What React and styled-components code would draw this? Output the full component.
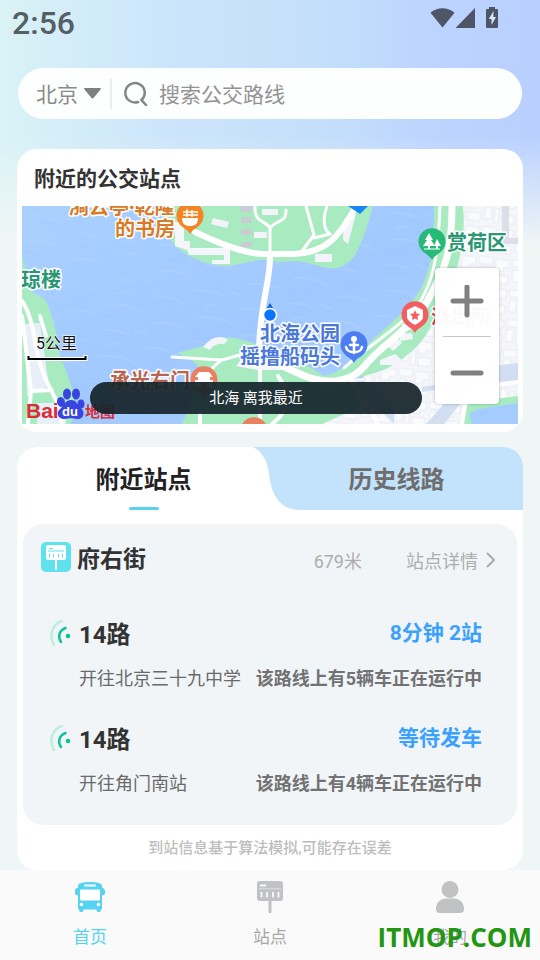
import React, { useState } from 'react';
import styled, { createGlobalStyle } from 'styled-components';

const GlobalStyle = createGlobalStyle`
  * {
    box-sizing: border-box;
  }

  body {
    background-color: #f0f6f6;
    font-family: Roboto, 'Noto Sans CJK SC', sans-serif;
    margin: 0;
  }

  button,
  input,
  select {
    background: none;
    border: 0;
    color: inherit;
    font: inherit;
    margin: 0;
    padding: 0;
  }

  h1,
  h2,
  h3,
  p {
    margin: 0;
  }
`;

const Page = styled.div`
  background:
    linear-gradient(to bottom, rgba(240, 246, 246, 0) 135px, #f0f6f6 245px),
    linear-gradient(to right, #d9f3f6 0%, #cde5fb 30%, #c3defb 62%, #bdd4ff 80%, #b9d0ff 100%);
  display: flex;
  flex-direction: column;
  min-height: 100vh;
`;

const StatusBar = styled.header`
  color: #545f66;
  display: flex;
  height: 68px;
  justify-content: space-between;
  padding: 6px 41px 0 12px;
`;

StatusBar.Time = styled.span`
  font-size: 32px;
  font-weight: 500;
  line-height: 34px;
`;

const SearchBar = styled.form`
  align-items: center;
  background-color: #fdfefe;
  border-radius: 26px;
  color: #8a8a8a;
  display: flex;
  font-size: 21px;
  height: 51px;
  margin: 0 18px 30px;
  padding: 0 18px;
`;

SearchBar.City = styled.label`
  align-items: center;
  border-right: 2px solid #ececec;
  display: flex;
  gap: 5px;
  height: 30px;
  margin-right: 12px;
  padding-right: 9px;
`;

SearchBar.Select = styled.select`
  appearance: none;
  line-height: 32px;
  padding-top: 2px;
  width: 43px;
`;

SearchBar.Input = styled.input`
  flex: 1;
  line-height: 32px;
  margin-left: 11px;
  min-width: 0;
  outline: none;
  padding-top: 2px;

  &::placeholder {
    color: #939393;
    opacity: 1;
  }
`;

const Card = styled.section`
  background-color: #fff;
  border-radius: 20px;
  margin: 0 17px;
  overflow: hidden;
`;

const MapCard = styled(Card)`
  margin-bottom: 15px;
  padding: 0 5px 8px;
`;

const MapTitle = styled.h1`
  color: #333;
  font-size: 21px;
  font-weight: 700;
  line-height: 53px;
  padding: 4px 12px 0;
`;

const MapView = styled.div`
  background-color: #a5ccff;
  height: 218px;
  overflow: hidden;
  position: relative;

  > svg {
    display: block;
    height: 100%;
    width: 100%;
  }
`;

const Toast = styled.p`
  background-color: rgba(21, 37, 43, 0.93);
  border-radius: 16px;
  bottom: 10px;
  color: #fff;
  font-size: 15px;
  left: 68px;
  line-height: 32px;
  position: absolute;
  right: 96px;
  text-align: center;
`;

const ZoomControl = styled.div`
  background-color: rgba(255, 255, 255, 0.97);
  border-radius: 4px;
  box-shadow: 0 0 3px rgba(0, 0, 0, 0.3);
  display: flex;
  flex-direction: column;
  padding: 0 8px;
  position: absolute;
  right: 19px;
  top: 62px;
`;

ZoomControl.Button = styled.button`
  height: 68px;
  width: 48px;

  & + & {
    border-top: 1px solid #c8c8c8;
  }

  svg {
    display: block;
    margin: 0 auto;
  }
`;

const TabBar = styled.div`
  background-color: #c3e2fb;
  display: grid;
  grid-template-columns: 1fr 1fr;
  height: 63px;
`;

const Tab = styled.button`
  color: ${(props) => (props.$active ? '#222' : '#6e6e6e')};
  font-size: 24px;
  font-weight: 700;
  line-height: 59px;
  padding-top: 4px;
  position: relative;

  &::before {
    background-color: #fff;
    content: ${(props) => (props.$active ? "''" : 'none')};
    inset: 0 17px 0 0;
    position: absolute;
  }

  &::after {
    background-color: #56d3ee;
    border-radius: 2px;
    bottom: 0;
    content: ${(props) => (props.$active ? "''" : 'none')};
    height: 3px;
    left: calc(50% - 15px);
    position: absolute;
    width: 30px;
  }

  svg {
    left: calc(100% - 17px);
    position: absolute;
    top: 0;
  }

  span {
    position: relative;
  }
`;

const StationPanel = styled.div`
  background-color: #f1f5f7;
  border-radius: 20px;
  margin: 14px 6px 0;
  padding-bottom: 10px;
`;

const StationHeader = styled.div`
  align-items: center;
  display: flex;
  height: 66px;
  margin-bottom: 15px;
  padding: 0 21px 0 18px;
`;

StationHeader.Name = styled.h2`
  color: #333;
  flex: 1;
  font-size: 23px;
  font-weight: 700;
  line-height: 36px;
  margin-left: 6px;
  padding-top: 6px;
`;

StationHeader.Distance = styled.span`
  color: #adadad;
  font-size: 18px;
  margin-right: 44px;
  padding-top: 6px;
`;

StationHeader.Link = styled.a`
  align-items: center;
  color: #adadad;
  display: flex;
  font-size: 18px;
  gap: 7px;
  padding-top: 6px;
  text-decoration: none;
`;

const Route = styled.article`
  display: grid;
  grid-template-columns: 24px 1fr auto;
  column-gap: 5px;
  row-gap: 12px;
  padding: 12px 35px 17px 27px;
`;

Route.Signal = styled.svg`
  margin-top: 2px;
`;

Route.Name = styled.h3`
  color: #333;
  font-size: 24px;
  font-weight: 700;
  line-height: 36px;
`;

Route.Arrival = styled.p`
  color: #3ba1ff;
  font-size: 21px;
  font-weight: 700;
  line-height: 32px;
  text-align: right;
`;

Route.Direction = styled.p`
  color: #6a6a6a;
  font-size: 18px;
  grid-column: 2;
  line-height: 28px;
`;

Route.Running = styled.p`
  color: #727272;
  font-size: 18px;
  font-weight: 700;
  line-height: 28px;
`;

const Notice = styled.p`
  color: #bdbdbd;
  font-size: 15px;
  font-weight: 500;
  line-height: 43px;
  padding-top: 2px;
  text-align: center;
`;

const NavBar = styled.nav`
  background-color: #fafafa;
  display: grid;
  grid-template-columns: repeat(3, 1fr);
  height: 90px;
  margin-top: auto;
  padding-top: 11px;
  position: relative;
`;

NavBar.Item = styled.a`
  align-items: center;
  color: ${(props) => (props.$active ? '#56d3ee' : '#a8a8a8')};
  display: flex;
  flex-direction: column;
  font-size: 17px;
  gap: 12px;
  line-height: 24px;
  text-decoration: none;
`;

const Watermark = styled.span`
  bottom: 5px;
  color: #229612;
  font-family: 'Open Sans', 'Noto Sans', sans-serif;
  font-size: 26px;
  font-weight: 700;
  line-height: 36px;
  pointer-events: none;
  position: absolute;
  right: 8px;
`;

const MapLabel = styled.text`
  fill: ${(props) => props.$color};
  font-family: 'Noto Sans', 'Noto Sans CJK SC', sans-serif;
  font-size: 20px;
  font-weight: 700;
  paint-order: stroke;
  stroke: #fff;
  stroke-linejoin: round;
  stroke-width: 3px;
`;

const ScaleLabel = styled.text`
  fill: #111;
  font-size: 16px;
  paint-order: stroke;
  stroke: #fff;
  stroke-width: 1px;
`;

const LogoText = styled.text`
  fill: ${(props) => props.$color};
  font-family: 'Liberation Sans', 'Noto Sans CJK SC', sans-serif;
  font-size: ${(props) => props.$size}px;
  font-weight: 700;
`;

const routes = [
  {
    id: 1, name: '14路', arrival: '8分钟 2站', direction: '开往北京三十九中学', running: '该路线上有5辆车正在运行中',
  },
  {
    id: 2, name: '14路', arrival: '等待发车', direction: '开往角门南站', running: '该路线上有4辆车正在运行中',
  },
];

function StatusIcons() {
  return (
    <svg width="69" height="24" viewBox="430 6 69 24" fill="#4d5566" aria-hidden="true">
      <path d="M442.500 27.500L430.500 12.800C437 6.600 448 6.600 454.500 12.800Z" />
      <path d="M475 8V28H455.500Z" />
      <path d="M489 7H495V9H497Q498 9 498 10V27Q498 28 497 28H487Q486 28 486 27V10Q486 9 487 9H489Z" />
      <path d="M493.500 11L488.800 19H491.500V25L496 17H493.300Z" fill="#dbe6ff" />
    </svg>
  );
}

function Pin({ x, y, color, children }) {
  return (
    <g transform={`translate(${x} ${y})`}>
      <path d="M0 18C-2 14-5 13-8 10.500A13.500 13.500 0 1 1 8 10.500C5 13 2 14 0 18Z" fill={color} />
      {children}
    </g>
  );
}

function MapDrawing() {
  return (
    <svg viewBox="0 0 496 218" preserveAspectRatio="xMidYMid slice" role="img" aria-label="附近的公交站点">
      <defs>
        <linearGradient id="water" x1="0" y1="0" x2="1" y2="1">
          <stop offset="0" stopColor="#a9d0ff" />
          <stop offset="0.5" stopColor="#a2c9ff" />
          <stop offset="1" stopColor="#a8ceff" />
        </linearGradient>
        <pattern id="ripples" width="90" height="52" patternUnits="userSpaceOnUse" patternTransform="rotate(8)">
          <path d="M4 8Q18 4 34 9M48 20Q64 15 84 22M8 34Q28 29 44 36M56 46Q70 41 86 46M38 3L52 7M14 22L26 18" fill="none" stroke="#c2dcff" strokeWidth="1" opacity="0.35" />
          <path d="M20 14Q32 11 46 16M60 34L74 30M2 46Q14 43 28 48" fill="none" stroke="#97bff8" strokeWidth="1" opacity="0.3" />
        </pattern>
        <pattern id="blocks" width="34" height="30" patternUnits="userSpaceOnUse" patternTransform="rotate(6)">
          <path d="M1 3H15V11H9V15H1ZM18 2H32V9H18ZM19 12H26V24H19ZM29 13H33V27H29ZM2 19H15V27H2Z" fill="#fafbfe" stroke="#e4e7ef" strokeWidth="0.800" />
        </pattern>
      </defs>

      <rect width="496" height="218" fill="url(#water)" />
      <rect width="496" height="218" fill="url(#ripples)" />

      {/* city on the east bank */}
      <path d="M425 0H496V218H220L300 174L340 172L392 130L412 100L420 60Z" fill="#f5f6fb" />
      <path d="M440 0H496V218H300L336 172L366 166L400 135L425 90Z" fill="url(#blocks)" />
      <path d="M480 0H487V32H496V38H480Z" fill="#dcdfe8" />

      {/* north island */}
      <path d="M150 0C142 12 144 24 148 32C152 42 170 56 200 60C214 61 228 54 240 54C252 54 258 58 268 55C280 54 296 60 306 62C314 64 326 60 333 49C341 35 346 18 351 0Z" fill="#a8ebc0" />
      <path d="M153 16H162V35H168V42H208V58H190V54H202V49H167L165 44L153 40Z" fill="#f4f6fc" />
      <path d="M191 12L207 16L205 22L189 18ZM232 26H245V32H232ZM240 3H256V9H240ZM293 48H310V56H293ZM322 13L334 8L326 38L321 34Z" fill="#f3f4fb" />
      <path d="M219 0H230V6H219ZM219 11H230V17H219ZM219 23H230V29H219ZM219 36H230V41H219Z" fill="#c9ccd4" />

      {/* west bank */}
      <path d="M0 49C4 64 6 80 10 86C16 90 22 90 25 97C34 120 36 138 38 150C48 174 60 202 48 218H0Z" fill="#a8ebc0" />
      <path d="M3 118L18 117L27 180L5 190ZM15 197H44V218H15Z" fill="#e8eff9" />
      <g fill="none" stroke="#fff" strokeLinecap="round" strokeLinejoin="round">
        <path d="M0 95Q9 108 13 135T28 182T40 218" strokeWidth="4" />
        <path d="M0 110L9 185L6 218M9 185L30 184M18 110L24 130" strokeWidth="4" />
      </g>

      {/* east bank greenery */}
      <path d="M412 0H441C444 30 438 60 424 92C414 112 402 138 386 148C370 164 346 170 326 173L340 200L300 218H160L174 184L190 175L172 156L155 147C172 142 180 142 192 135C208 126 226 136 246 142C270 148 286 160 302 170C322 166 336 148 348 136C366 120 386 104 398 84C412 58 412 30 412 0Z" fill="#a8ebc0" />
      <path d="M181 141C190 130 200 129 206 134L202 138C196 137 190 140 188 144ZM214 160L222 150L250 150L262 164L236 164ZM206 187H218V198H206Z" fill="#f3f5fb" />
      <path d="M358 154L373 148L380 154L376 159L358 159ZM366 140L376 132L380 137L371 145ZM380 118L398 114L400 121L382 125ZM378 128L390 127L391 133L378 135Z" fill="#f3f5fb" />
      <path d="M446 163L496 157V177L452 181L422 218H404L438 180L400 186V181L440 174ZM342 175L372 205L372 218L330 176Z" fill="#d2dff2" />
      <path d="M440 218L443 197L496 190V218Z" fill="#a8ebc0" />
      <path d="M450 218L447 208L456 203L496 197V218Z" fill="#a5ccff" />

      {/* roads */}
      <g fill="none" stroke="#fff" strokeLinecap="round" strokeLinejoin="round">
        <path d="M173 26C190 34 218 47 240 48H272C304 47 318 30 334 0" strokeWidth="6" />
        <path d="M248 48C249 76 238 94 237 144" strokeWidth="6" />
        <path d="M233 0C232 18 244 14 248 22V48M248 22C256 12 264 18 264 4M284 0L292 29L280 45M305 0C300 14 302 24 308 28L292 32" strokeWidth="3" />
        <path d="M430 0C430 44 424 62 406 94C390 122 366 134 346 156C330 178 304 180 278 168C256 158 240 150 222 144" strokeWidth="7" />
        <path d="M150 151L200 154L228 146M200 154C188 162 182 172 180 184" strokeWidth="3" />
        <path d="M418 0C416 56 410 76 397 98C376 124 350 136 322 162" strokeWidth="3" />
        <path d="M178 200V218M238 165V218M256 170C270 190 266 206 250 218M330 175C340 194 350 204 356 218M440 218L446 182L496 176" strokeWidth="4" />
      </g>

      <path d="M326 0H346L338 8Z" fill="#1687f5" />
      <MapLabel x="47" y="8" $color="#d87b28">漪云亭·乾隆</MapLabel>
      <MapLabel x="93" y="30" $color="#d87b28">的书房</MapLabel>
      <MapLabel x="-1" y="81" $color="#2a9772">琼楼</MapLabel>
      <MapLabel x="425" y="44" $color="#2a9772">赏荷区</MapLabel>
      <MapLabel x="409" y="118" $color="#e04848">派出所</MapLabel>
      <MapLabel x="238" y="135" $color="#4b78dc">北海公园</MapLabel>
      <MapLabel x="218" y="158" $color="#4b78dc">摇撸船码头</MapLabel>
      <MapLabel x="88" y="182" $color="#b8654f">承光右门</MapLabel>

      <Pin x="168" y="10" color="#f58424">
        <path d="M-8 2H8C8 8 5 10 0 10S-8 8-8 2Z" fill="#fff" />
        <path d="M-7-4H8M-7-1H8M-3-7V1M2-6V1" fill="none" stroke="#fff" strokeWidth="1.500" />
      </Pin>
      <Pin x="410" y="36" color="#27b978">
        <path d="M-3-9L1-2H-1L3 4H-2V7H-4V4H-9L-5-2H-7ZM5-3L9 4H6V7H4V4H2ZM-8 6.500H8V7.500H-8Z" fill="#fff" />
      </Pin>
      <Pin x="393" y="109" color="#f25e62">
        <path d="M0-9L8-5V3C6 7 3 8 0 10C-3 8-6 7-8 3V-5Z" fill="#fff" />
        <path d="M0-5L1.500-1.500L5-1L2.500 1.500L3 5L0 3.500L-3 5L-2.500 1.500L-5-1L-1.500-1.500Z" fill="#f25e62" />
      </Pin>
      <Pin x="332" y="139" color="#4d7ff0">
        <path d="M0-4V8M-4 0H4M-8 2C-7 9 7 9 8 2" fill="none" stroke="#fff" strokeWidth="2.500" strokeLinecap="round" />
        <circle cy="-6" r="3" fill="#fff" />
      </Pin>
      <Pin x="182" y="174" color="#e98062">
        <path d="M-9-3L-5-8H5L9-3H6V0H9V7H3V2H-3V7H-9V0H-6V-3Z" fill="#fff" />
      </Pin>
      <Pin x="232" y="225" color="#e98062" />

      <path d="M248 97L254 107H242Z" fill="#1462d4" />
      <circle cx="248" cy="109" r="6.500" fill="#0874ff" stroke="#fff" strokeWidth="1.500" />

      <ScaleLabel x="14" y="143">5公里</ScaleLabel>
      <path d="M6.500 149V153H63.500V149" fill="none" stroke="#fff" strokeWidth="4" />
      <path d="M6.500 150V153H63.500V150" fill="none" stroke="#000" strokeWidth="2" />

      <LogoText x="4" y="212" $size="21" $color="#dc2c35">Bai</LogoText>
      <g fill="#3845e0">
        <ellipse cx="39" cy="196" rx="4" ry="5" transform="rotate(-15 39 196)" />
        <ellipse cx="45" cy="188" rx="4" ry="5.500" />
        <ellipse cx="54" cy="188" rx="4" ry="5.500" />
        <ellipse cx="59" cy="198" rx="3.500" ry="4.500" />
        <path d="M49 194C43 194 42 200 38 203C33 207 37 214 43 213C47 212 51 212 55 213C61 214 64 207 59 202C55 199 55 194 49 194Z" />
      </g>
      <LogoText x="40" y="210" $size="13" $color="#fff">du</LogoText>
      <LogoText x="63" y="211" $size="15" $color="#dc2c35">地图</LogoText>
    </svg>
  );
}

function StationSign() {
  return (
    <svg width="32" height="32" viewBox="0 0 32 32" aria-hidden="true">
      <rect x="3" width="26" height="20" rx="3" fill="#c1c2c4" />
      <rect x="14.500" y="19" width="3" height="13" rx="1" fill="#c1c2c4" />
      <path d="M6 4.500H12M7.500 11V16.500M13 11V16.500M19 11V16.500M24.500 11V16.500" stroke="#fafafa" strokeWidth="1.800" fill="none" />
      <path d="M5 7.800H27" stroke="#dedfe0" />
    </svg>
  );
}

function StationBadge() {
  return (
    <svg width="30" height="30" viewBox="0 0 30 30" aria-hidden="true">
      <rect width="30" height="30" rx="5" fill="#5fe2ee" />
      <rect x="5" y="3" width="20" height="15" rx="2" fill="#fff" />
      <rect x="14" y="17" width="2" height="11" rx="1" fill="#fff" />
      <path d="M8 6.500H12M7 9H23M8.500 11.500V15.500M12.500 11.500V15.500M17.500 11.500V15.500M21.500 11.500V15.500" stroke="#5fe2ee" fill="none" />
    </svg>
  );
}

function BusIcon() {
  return (
    <svg width="32" height="32" viewBox="0 0 32 32" aria-hidden="true">
      <path d="M4 5C4 2 9 1 16 1S28 2 28 5V7H29Q31 7.500 31 10V12Q31 14 28 14.500V27Q28 28 27 28.500C27 32 22.500 32 22.500 28.500H9.500C9.500 32 5 32 5 28.500Q4 28 4 27V14.500Q1 14 1 12V10Q1 7.500 3 7H4Z" fill="#56d3ee" />
      <rect x="10" y="3.500" width="12" height="2" rx="1" fill="#fff" />
      <rect x="6" y="8.500" width="20" height="11" rx="1" fill="#fff" />
      <circle cx="7.500" cy="23.500" r="1.800" fill="#fff" />
      <circle cx="24.500" cy="23.500" r="1.800" fill="#fff" />
    </svg>
  );
}

function UserIcon() {
  return (
    <svg width="32" height="32" viewBox="0 0 32 32" fill="#c1c2c4" aria-hidden="true">
      <circle cx="16" cy="8.500" r="8.500" />
      <path d="M2 28C2 21 7 17.500 12 17.500H20C25 17.500 30 21 30 28Q30 32 26 32H6Q2 32 2 28Z" />
    </svg>
  );
}

function RouteItem({ route }) {
  return (
    <Route>
      <Route.Signal width="24" height="28" viewBox="0 0 24 28" fill="none" strokeLinecap="round" aria-hidden="true">
        <path d="M11.500 2C1 6.500-1 17 4 26" stroke="#bdeedd" strokeWidth="2.500" />
        <path d="M15.500 9C9 11.500 7.500 18 11 23" stroke="#10c29b" strokeWidth="2.500" />
        <circle cx="18" cy="17" r="2.300" fill="#10c29b" />
      </Route.Signal>
      <Route.Name>{route.name}</Route.Name>
      <Route.Arrival>{route.arrival}</Route.Arrival>
      <Route.Direction>{route.direction}</Route.Direction>
      <Route.Running>{route.running}</Route.Running>
    </Route>
  );
}

function App() {
  const [city, setCity] = useState('北京');
  const [query, setQuery] = useState('');

  return (
    <Page>
      <GlobalStyle />
      <StatusBar>
        <StatusBar.Time>2:56</StatusBar.Time>
        <StatusIcons />
      </StatusBar>

      <SearchBar onSubmit={(e) => e.preventDefault()}>
        <SearchBar.City>
          <SearchBar.Select aria-label="城市" value={city} onChange={(e) => setCity(e.target.value)}>
            <option>北京</option>
          </SearchBar.Select>
          <svg width="17" height="11" viewBox="0 0 17 11" aria-hidden="true">
            <path d="M1 0H16Q17.500 0 16.500 1.500L9.500 10Q8.500 11 7.500 10L0.500 1.500Q-0.500 0 1 0Z" fill="#808080" />
          </svg>
        </SearchBar.City>
        <svg width="24" height="26" viewBox="0 0 24 26" fill="none" stroke="#868686" strokeWidth="2.500" strokeLinecap="round" aria-hidden="true">
          <path d="M14 21A9.700 9.700 0 1 1 17.500 19L22 24" />
        </svg>
        <SearchBar.Input
          aria-label="搜索公交路线"
          placeholder="搜索公交路线"
          value={query}
          onChange={(e) => setQuery(e.target.value)}
        />
      </SearchBar>

      <MapCard>
        <MapTitle>附近的公交站点</MapTitle>
        <MapView>
          <MapDrawing />
          <Toast>北海 离我最近</Toast>
          <ZoomControl>
            <ZoomControl.Button type="button" aria-label="放大">
              <svg width="34" height="34" viewBox="0 0 34 34" stroke="#808080" strokeWidth="5" strokeLinecap="round">
                <path d="M17 2V30M3 16H31" />
              </svg>
            </ZoomControl.Button>
            <ZoomControl.Button type="button" aria-label="缩小">
              <svg width="34" height="34" viewBox="0 0 34 34" stroke="#808080" strokeWidth="5" strokeLinecap="round">
                <path d="M3 19H31" />
              </svg>
            </ZoomControl.Button>
          </ZoomControl>
        </MapView>
      </MapCard>

      <Card>
        <TabBar>
          <Tab type="button" $active>
            <svg width="47" height="63" viewBox="0 0 47 63" aria-hidden="true">
              <path d="M0 0C10 5 14 14 16 26C18 48 27 63 47 63H0Z" fill="#fff" />
            </svg>
            <span>附近站点</span>
          </Tab>
          <Tab type="button"><span>历史线路</span></Tab>
        </TabBar>
        <StationPanel>
          <StationHeader>
            <StationBadge />
            <StationHeader.Name>府右街</StationHeader.Name>
            <StationHeader.Distance>679米</StationHeader.Distance>
            <StationHeader.Link href="#station">
              站点详情
              <svg width="11" height="16" viewBox="0 0 11 16" fill="none" stroke="#aaa" strokeWidth="2" aria-hidden="true">
                <path d="M2 1L9 8L2 15" />
              </svg>
            </StationHeader.Link>
          </StationHeader>
          {routes.map((route) => <RouteItem key={route.id} route={route} />)}
        </StationPanel>
        <Notice>到站信息基于算法模拟,可能存在误差</Notice>
      </Card>

      <NavBar>
        <NavBar.Item href="#home" $active>
          <BusIcon />
          首页
        </NavBar.Item>
        <NavBar.Item href="#stations">
          <StationSign />
          站点
        </NavBar.Item>
        <NavBar.Item href="#me">
          <UserIcon />
          我的
        </NavBar.Item>
        <Watermark>ITMOP.COM</Watermark>
      </NavBar>
    </Page>
  );
}

export default App;
